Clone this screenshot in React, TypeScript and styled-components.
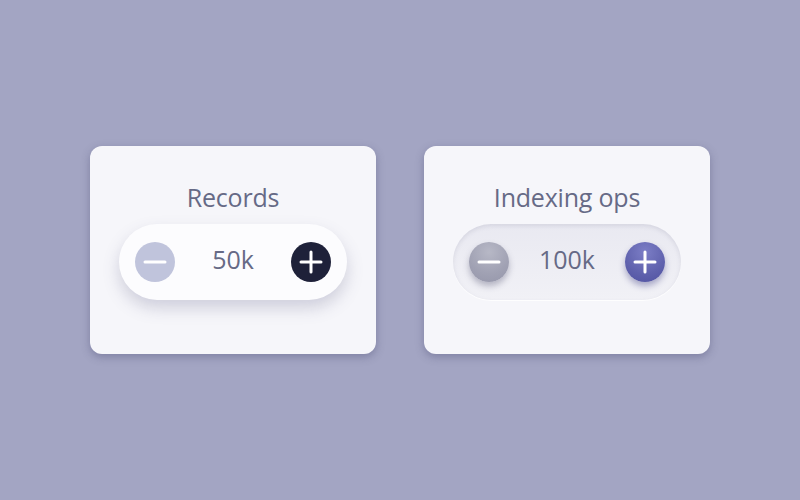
import React, { useState } from 'react';
import styled, { createGlobalStyle, css } from 'styled-components';

const GlobalStyle = createGlobalStyle`
  html, body {
    margin: 0;
    padding: 0;
    background: #a3a5c3;
  }
  body {
    font-family: "Open Sans", "Noto Sans", sans-serif;
  }
`;

const Page = styled.div`
  width: 800px;
  height: 500px;
  display: flex;
  align-items: center;
  justify-content: center;
  gap: 48px;
`;

const Card = styled.div`
  width: 286px;
  height: 208px;
  box-sizing: border-box;
  padding-top: 36px;
  background: #f6f6fa;
  border-radius: 12px;
  box-shadow: 0 3px 8px rgba(60, 60, 100, 0.35);
  display: flex;
  flex-direction: column;
  align-items: center;
  gap: 12px;
`;

const Title = styled.div`
  font-size: 25px;
  line-height: 30px;
  color: #666a86;
  letter-spacing: -0.2px;
`;

const Pill = styled.div<{ $variant: 'flat' | 'soft' }>`
  width: 228px;
  height: 76px;
  box-sizing: border-box;
  border-radius: 38px;
  padding: 0 16px;
  display: flex;
  align-items: center;
  justify-content: space-between;
  ${({ $variant }) =>
    $variant === 'flat'
      ? css`
          background: #fcfcfe;
          box-shadow: 0 8px 16px rgba(90, 92, 130, 0.25);
        `
      : css`
          background: linear-gradient(180deg, #e9e9f1 0%, #f1f1f6 100%);
          box-shadow: inset 0 2px 4px rgba(120, 120, 150, 0.18),
            0 1px 1px rgba(255, 255, 255, 0.9);
        `}
`;

const Value = styled.div`
  font-size: 25px;
  line-height: 30px;
  padding-bottom: 6px;
  color: #666a86;
  flex: 1;
  text-align: center;
`;

type Tone = 'lightMinus' | 'darkPlus' | 'greyMinus' | 'bluePlus';

const toneStyles: Record<Tone, ReturnType<typeof css>> = {
  lightMinus: css`
    background: #c0c4dc;
  `,
  darkPlus: css`
    background: #1e2139;
  `,
  greyMinus: css`
    background: radial-gradient(circle at 50% 25%, #b7b8c6 0%, #a0a1b3 60%, #9596aa 100%);
    box-shadow: 0 4px 6px rgba(70, 70, 100, 0.35);
  `,
  bluePlus: css`
    background: radial-gradient(circle at 50% 25%, #7c7ec6 0%, #5f61ad 60%, #4f51a0 100%);
    box-shadow: 0 4px 6px rgba(60, 60, 130, 0.4);
  `,
};

const RoundButton = styled.button<{ $tone: Tone }>`
  width: 40px;
  height: 40px;
  border: none;
  border-radius: 50%;
  padding: 0;
  display: flex;
  align-items: center;
  justify-content: center;
  cursor: pointer;
  flex-shrink: 0;
  ${({ $tone }) => toneStyles[$tone]}
`;

const MinusIcon = () => (
  <svg width="26" height="26" viewBox="0 0 26 26">
    <line x1="3" y1="13" x2="23" y2="13" stroke="#fff" strokeWidth="3" strokeLinecap="round" />
  </svg>
);

const PlusIcon = () => (
  <svg width="26" height="26" viewBox="0 0 26 26">
    <line x1="3" y1="13" x2="23" y2="13" stroke="#fff" strokeWidth="3" strokeLinecap="round" />
    <line x1="13" y1="3" x2="13" y2="23" stroke="#fff" strokeWidth="3" strokeLinecap="round" />
  </svg>
);

interface StepperCardProps {
  title: string;
  initial: number;
  step: number;
  variant: 'flat' | 'soft';
}

const formatK = (n: number) => `${n}k`;

const StepperCard: React.FC<StepperCardProps> = ({ title, initial, step, variant }) => {
  const [value, setValue] = useState(initial);
  const flat = variant === 'flat';

  return (
    <Card>
      <Title>{title}</Title>
      <Pill $variant={variant}>
        <RoundButton
          $tone={flat ? 'lightMinus' : 'greyMinus'}
          onClick={() => setValue((v) => Math.max(0, v - step))}
          aria-label="decrease"
        >
          <MinusIcon />
        </RoundButton>
        <Value>{formatK(value)}</Value>
        <RoundButton
          $tone={flat ? 'darkPlus' : 'bluePlus'}
          onClick={() => setValue((v) => v + step)}
          aria-label="increase"
        >
          <PlusIcon />
        </RoundButton>
      </Pill>
    </Card>
  );
};

const App: React.FC = () => (
  <>
    <GlobalStyle />
    <Page>
      <StepperCard title="Records" initial={50} step={10} variant="flat" />
      <StepperCard title="Indexing ops" initial={100} step={10} variant="soft" />
    </Page>
  </>
);

export default App;
